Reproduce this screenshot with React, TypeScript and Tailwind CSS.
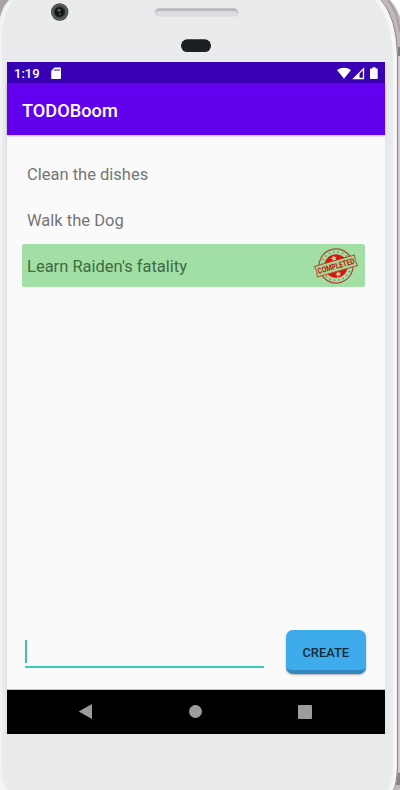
import React from "react";

function PhoneShell() {
  return (
    <svg className="pointer-events-none absolute inset-0" width="400" height="790" viewBox="0 0 400 790" aria-hidden="true">
      <defs>
        <radialGradient id="lens">
          <stop offset="0" stopColor="#3f4340" />
          <stop offset="0.25" stopColor="#141616" />
          <stop offset="0.55" stopColor="#2a2d2e" />
          <stop offset="0.8" stopColor="#606365" />
          <stop offset="1" stopColor="#3c3e40" />
        </radialGradient>
        <linearGradient id="speaker" x1="0" y1="0" x2="0" y2="1">
          <stop offset="0" stopColor="#a3a4a8" />
          <stop offset="0.3" stopColor="#c9cacd" />
          <stop offset="1" stopColor="#e2e3e5" />
        </linearGradient>
      </defs>
      <path d="M0 0H9Q2 7 0 18Z" fill="#aaa3a8" />
      <path d="M9 0Q3 7 0 19V28Q3 12 13 0Z" fill="#dedbde" />
      <path d="M13 0Q4 12 2 30V790H0V20Q2 8 10 0Z" fill="#f3f3f5" />
      <path d="M5 62H7V734H5Z" fill="#e3e4e7" />
      <path d="M382 0H391Q396 6 400 17V790H393L397 768V56Q396 19 382 0Z" fill="#c1b8bc" />
      <path d="M390 0H400V16Q396 6 390 0Z" fill="#fff" />
      <path d="M388 0Q398 13 400 32" fill="none" stroke="#a59ba0" strokeWidth="1.5" />
      <path d="M381 0Q397 18 397.5 56V768Q397 782 393 790" fill="none" stroke="#91878d" strokeWidth="1" />
      <path d="M375 0Q392 20 393 58V768Q393 781 388 790H393Q396.5 782 396.5 768V56Q396 18 380 0Z" fill="#f6f5f7" />
      <path d="M385 62H389V734H385Z" fill="#e6e8eb" />
      <path d="M398 47H400V56H398Z" fill="#817e80" />
      <path d="M398 56H400V772H398Z" fill="#d5cbd0" />
      <path d="M398 773H400V785H396Z" fill="#88858a" />
      <path d="M0 772Q2 783 8 790H0Z" fill="#f5f5f6" />
      <circle cx="59.7" cy="12" r="8.7" fill="url(#lens)" />
      <circle cx="59.3" cy="12" r="4.5" fill="#111414" />
      <circle cx="59" cy="10.2" r="1.5" fill="#657064" />
      <circle cx="60" cy="14" r="1.2" fill="#3e4842" />
      <rect x="154.5" y="8.5" width="84" height="8.5" rx="4.2" fill="url(#speaker)" />
      <rect x="156" y="11.5" width="81" height="4.5" rx="2" fill="#dbdcdf" />
      <rect x="181" y="39.3" width="30" height="12.7" rx="6.3" fill="#1d2023" />
    </svg>
  );
}

function StatusBar() {
  return (
    <div className="flex h-[21px] items-center bg-[#3700b3] pr-[6px] pl-[7px] text-white">
      <span className="w-[37px] pt-[2px] text-[13px] leading-[19px] font-medium">1:19</span>
      <svg className="mt-[1px]" width="11" height="13" viewBox="0 0 11 13">
        <path d="M3.5 .5H9Q10 .5 10 1.5V11Q10 12 9 12H1.2Q.2 12 .2 11V4Z" fill="white" />
        <path d="M4 2V4M6 2V4M8 2V4" stroke="#3700b3" strokeWidth="1" />
      </svg>
      <svg className="mt-[1px] ml-auto" width="42" height="13" viewBox="0 0 42 13">
        <path d="M0 3Q7-1.7 14 3L7 11.7Z" fill="white" />
        <path d="M26.5 1.8V11.5H16.8Z" fill="none" stroke="white" strokeWidth="1.3" />
        <path d="M16 12L22.5 5.5V12Z" fill="white" />
        <path d="M34 1.5H35.5V.3H38.5V1.5H40Q40.7 1.5 40.7 2.3V11.3Q40.7 12 40 12H33.8Q33 12 33 11.3V2.3Q33 1.5 34 1.5Z" fill="white" />
      </svg>
    </div>
  );
}

function CompletedStamp() {
  return (
    <svg className="overflow-visible" width="46" height="38" viewBox="-23 -19 46 38" fill="none">
      <g transform="rotate(-16)">
        <circle r="17" stroke="#a84c31" strokeWidth="1.2" />
        <circle r="14.2" stroke="#a66b4a" strokeWidth="1.5" strokeDasharray="1.3 3.2" />
        <circle r="11.7" fill="#df120c" />
        <path d="M0-11L1-9L3-8.7L1.5-7.3L1.9-5.3L0-6.4L-1.9-5.3L-1.5-7.3L-3-8.7L-1-9Z" fill="#b5dc9e" />
        <path d="M0 5.5L1 7.3L3 7.5L1.5 8.9L1.9 10.8L0 9.8L-1.9 10.8L-1.5 8.9L-3 7.5L-1 7.3Z" fill="#b5dc9e" />
        <path d="M-21-5.5H21L20 0L21 5.5H-21L-20 0Z" fill="#abd596" stroke="#a84c31" strokeWidth=".9" />
        <text x="0" y="2.9" textAnchor="middle" textLength="38" lengthAdjust="spacingAndGlyphs" fontFamily="Roboto, sans-serif" fontSize="8.2" fontWeight="700" fill="#b01f11">COMPLETED</text>
      </g>
    </svg>
  );
}

const tasks = [
  { title: "Clean the dishes", done: false },
  { title: "Walk the Dog", done: false },
  { title: "Learn Raiden's fatality", done: true },
];

function NavigationBar() {
  return (
    <div className="flex h-[45px] items-center justify-between border-t border-[#bdbdbd] bg-black pr-[73px] pl-[71px]">
      <svg width="15" height="16" viewBox="0 0 15 16"><path d="M.7 7.5L14 .1V14.9Z" fill="#9c9c9c" /></svg>
      <div className="mb-px size-[13px] rounded-full bg-[#9c9c9c]" />
      <div className="size-[14px] rounded-[1px] bg-[#9c9c9c]" />
    </div>
  );
}

export default function App() {
  return (
    <div className="relative h-[790px] w-[400px] overflow-hidden bg-[#eaebed] pt-[62px] pl-[7px] font-['Roboto',sans-serif]">
      <PhoneShell />
      <main className="relative flex h-[672px] w-[378px] flex-col bg-[#fafafa]">
        <StatusBar />
        <header className="flex h-[52px] shrink-0 items-center bg-[#6200ee] pt-[4px] pl-[15px] text-[18.2px] font-medium text-white shadow-[0_1px_2px_rgba(0,0,0,0.28)]">
          TODOBoom
        </header>
        <ul className="mt-[17px] ml-[14.5px] flex w-[343px] flex-col gap-[3px]">
          {tasks.map((task) => (
            <li key={task.title} className={`flex h-[43px] items-center justify-between rounded-[2px] pr-[6px] pl-[5.5px] text-[16.5px] ${task.done ? "bg-[#a2dfa4] text-[#416a43]" : "text-[#757575]"}`}>
              <span className="pt-[3px]">{task.title}</span>
              {task.done && <CompletedStamp />}
            </li>
          ))}
        </ul>
        <div className="mt-auto mb-[15px] flex items-end justify-between pr-[19px] pl-[18px]">
          <div className="mb-[6px] flex h-[28px] w-[239px] items-start border-b-2 border-[#3bcbb9]">
            <span className="h-[23px] w-[2px] bg-[#3fbfb0]" />
          </div>
          <button className="h-[44px] w-[80.5px] rounded-[7px] border-b-4 border-[#3288c0] bg-[#3eabeb] pt-[5px] text-[12.9px] font-medium text-[#112b3c] shadow-[0_1px_2px_rgba(0,0,0,0.3)]">CREATE</button>
        </div>
        <NavigationBar />
      </main>
    </div>
  );
}
